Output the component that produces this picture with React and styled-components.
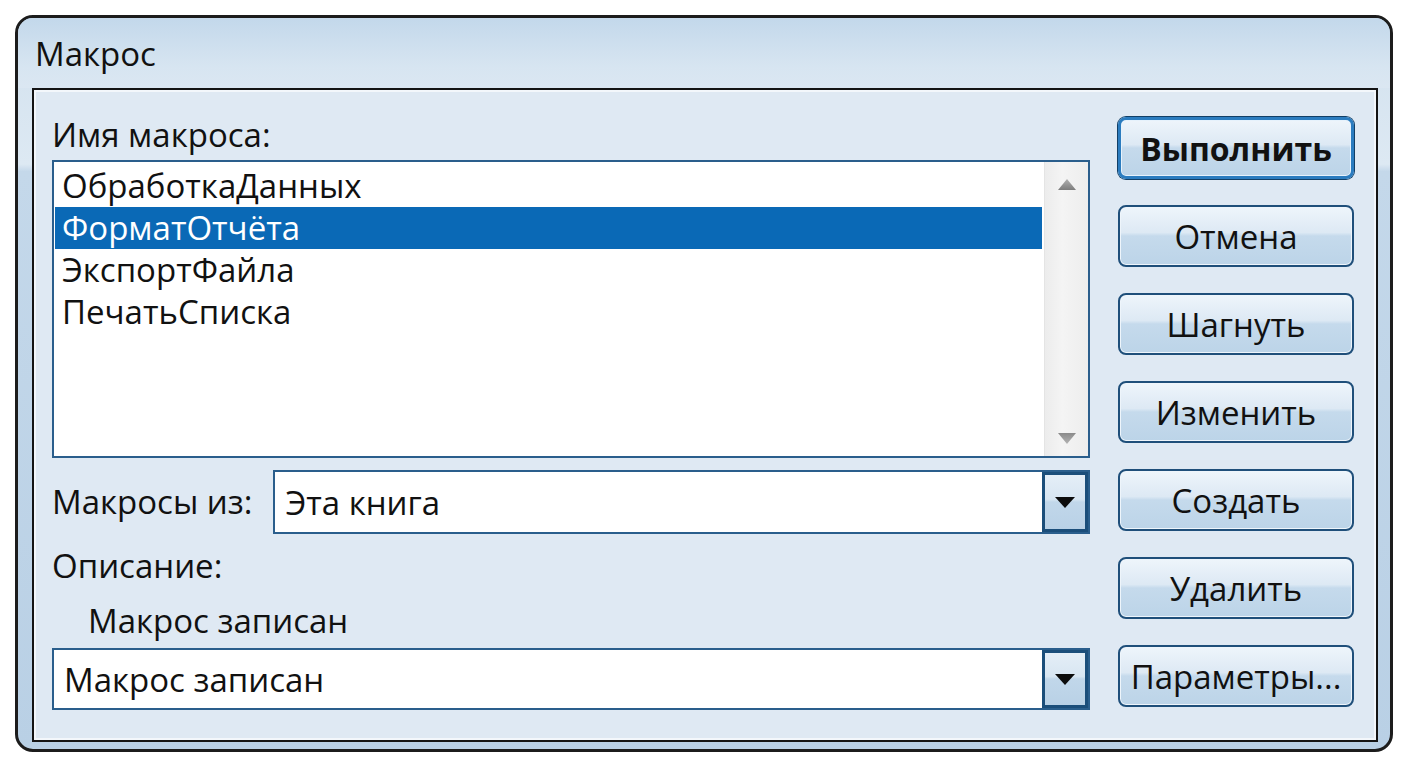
import React, { useState } from 'react';
import styled, { createGlobalStyle } from 'styled-components';

const GlobalStyle = createGlobalStyle`
  html, body {
    margin: 0;
    padding: 0;
    background: #ffffff;
  }
  body {
    font-family: "Open Sans", "Noto Sans", sans-serif;
    color: #111;
  }
  * {
    box-sizing: border-box;
  }
`;

const Window = styled.div`
  margin: 15px;
  width: 1378px;
  height: 737px;
  border: 3px solid #1c1c1c;
  border-radius: 18px;
  display: flex;
  flex-direction: column;
  background: linear-gradient(
    to bottom,
    #c4d8eb 0%,
    #d6e4f0 8%,
    #dde9f3 20%,
    #c4d8ea 21%,
    #b9d0e5 100%
  );
  overflow: hidden;
`;

const TitleBar = styled.div`
  height: 70px;
  display: flex;
  align-items: center;
  padding: 0 0 0 17px;
  font-size: 33px;
  color: #111;
  background: linear-gradient(to bottom, #c3d8eb 0%, #d7e5f1 70%, #dbe7f2 100%);
`;

const Panel = styled.div`
  flex: 1;
  margin: 0 12px 7px 14px;
  border: 2px solid #141414;
  box-shadow: inset 0 0 0 2px #f3f7fb;
  background: #dfe9f3;
  display: flex;
  padding: 27px 22px 0 18px;
  gap: 28px;
`;

const LeftColumn = styled.div`
  flex: 1;
  display: flex;
  flex-direction: column;
`;

const Label = styled.div`
  font-size: 33px;
  line-height: 36px;
  height: 36px;
  padding-left: ${(p) => p.indent || 0}px;
  margin-top: ${(p) => p.top || 0}px;
  white-space: nowrap;
`;

const ListBox = styled.div`
  margin-top: 7px;
  height: 298px;
  border: 2px solid #2a5e8c;
  background: #fff;
  display: flex;
`;

const Items = styled.div`
  flex: 1;
  padding-top: 3px;
  padding-left: 1px;
`;

const Item = styled.div`
  height: 42px;
  line-height: 42px;
  padding-left: 7px;
  font-size: 33px;
  color: ${(p) => (p.selected ? '#fff' : '#111')};
  background: ${(p) => (p.selected ? '#0a69b6' : 'transparent')};
  cursor: default;
  white-space: nowrap;
`;

const ScrollBar = styled.div`
  width: 44px;
  margin-left: 2px;
  background: linear-gradient(to right, #ececec, #f4f4f4 40%, #ededed);
  border-left: 1px solid #e4e4e4;
  display: flex;
  flex-direction: column;
  justify-content: space-between;
  align-items: center;
  padding: 17px 0 12px;
`;

const Arrow = ({ down }) => (
  <svg width="18" height="11" viewBox="0 0 18 11">
    <defs>
      <linearGradient id={down ? 'ad' : 'au'} x1="0" y1="0" x2="0" y2="1">
        <stop offset="0" stopColor={down ? '#8a8a8a' : '#b0b0b0'} />
        <stop offset="1" stopColor={down ? '#b4b4b4' : '#7c7c7c'} />
      </linearGradient>
    </defs>
    <polygon
      points={down ? '0,0 18,0 9,11' : '9,0 18,11 0,11'}
      fill={`url(#${down ? 'ad' : 'au'})`}
    />
  </svg>
);

const ComboRow = styled.div`
  display: flex;
  align-items: center;
  margin-top: ${(p) => p.top || 0}px;
  gap: 21px;
`;

const Combo = styled.div`
  flex: 1;
  height: ${(p) => p.h}px;
  border: 2px solid #2a5e8c;
  background: #fff;
  display: flex;
  align-items: stretch;
`;

const ComboText = styled.div`
  flex: 1;
  display: flex;
  align-items: center;
  padding-left: 10px;
  font-size: 33px;
  white-space: nowrap;
`;

const DropButton = styled.div`
  width: 46px;
  border: 3px solid #1b4e7a;
  background: linear-gradient(to bottom, #e4eef7 0%, #d8e6f2 45%, #c1d7ea 50%, #b9d1e6 100%);
  display: flex;
  align-items: center;
  justify-content: center;
`;

const DropArrow = () => (
  <svg width="20" height="11" viewBox="0 0 20 11">
    <polygon points="0,0 20,0 10,11" fill="#0c0c0c" />
  </svg>
);

const ButtonColumn = styled.div`
  width: 236px;
  display: flex;
  flex-direction: column;
  gap: 26px;
`;

const Button = styled.button`
  height: 62px;
  width: 100%;
  font-family: "Open Sans", "Noto Sans", sans-serif;
  font-size: ${(p) => (p.primary ? 32 : 33)}px;
  font-weight: ${(p) => (p.primary ? 700 : 400)};
  color: #111;
  border-radius: 8px;
  border: ${(p) => (p.primary ? '3px solid #2b7cbf' : '2px solid #1f4f7a')};
  box-shadow: ${(p) =>
    p.primary
      ? '0 0 0 1px #123f66, inset 0 0 0 1px #e6f2fc'
      : 'inset 0 0 0 1px #eef5fb'};
  background: linear-gradient(
    to bottom,
    #eef5fb 0%,
    #dde9f4 44%,
    #c5daec 50%,
    #bcd4e8 100%
  );
  padding: 0;
  cursor: pointer;
  white-space: nowrap;
`;

const macros = ['ОбработкаДанных', 'ФорматОтчёта', 'ЭкспортФайла', 'ПечатьСписка'];
const buttons = ['Выполнить', 'Отмена', 'Шагнуть', 'Изменить', 'Создать', 'Удалить', 'Параметры...'];

export default function App() {
  const [selected, setSelected] = useState(1);

  return (
    <>
      <GlobalStyle />
      <Window>
        <TitleBar>Макрос</TitleBar>
        <Panel>
          <LeftColumn>
            <Label>Имя макроса:</Label>
            <ListBox>
              <Items>
                {macros.map((m, i) => (
                  <Item key={m} selected={i === selected} onClick={() => setSelected(i)}>
                    {m}
                  </Item>
                ))}
              </Items>
              <ScrollBar>
                <Arrow />
                <Arrow down />
              </ScrollBar>
            </ListBox>
            <ComboRow top={12}>
              <Label>Макросы из:</Label>
              <Combo h={64}>
                <ComboText>Эта книга</ComboText>
                <DropButton>
                  <DropArrow />
                </DropButton>
              </Combo>
            </ComboRow>
            <Label top={14}>Описание:</Label>
            <Label top={19} indent={36}>Макрос записан</Label>
            <ComboRow top={9}>
              <Combo h={62}>
                <ComboText>Макрос записан</ComboText>
                <DropButton>
                  <DropArrow />
                </DropButton>
              </Combo>
            </ComboRow>
          </LeftColumn>
          <ButtonColumn>
            {buttons.map((b, i) => (
              <Button key={b} primary={i === 0}>
                {b}
              </Button>
            ))}
          </ButtonColumn>
        </Panel>
      </Window>
    </>
  );
}
